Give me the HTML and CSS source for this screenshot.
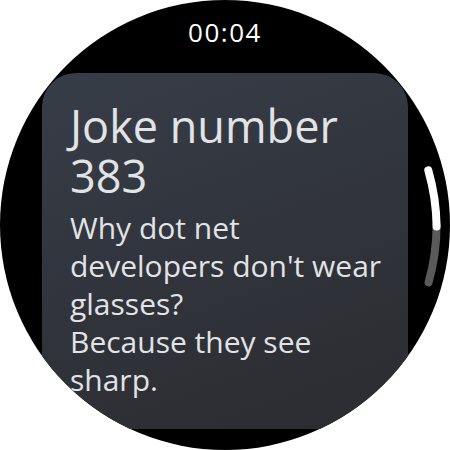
FILE: index.html
```html
<!DOCTYPE html>
<html lang="en">
<head>
    <meta charset="utf-8"/>
    <meta name="viewport" content="width=device-width, initial-scale=1.0">
    <title>Joke</title>
    <link rel="stylesheet" href="styles.css">
</head>
<body>
    <div class="watch">
        <div class="time">00:04</div>
        <div class="card">
            <h1>Joke number 383</h1>
            <p>Why dot net developers don't wear glasses?</p>
            <p>Because they see sharp.</p>
        </div>
        <!-- scroll indicator follows the bezel -->
        <svg class="scroll" viewBox="0 0 450 450">
            <path class="track" d="M 436.6 225.0 A 211.5 211.5 0 0 1 428.6 282.4"/>
            <path class="thumb" d="M 428.3 170.3 A 211.5 211.5 0 0 1 436.6 226.5"/>
        </svg>
    </div>
</body>
</html>
```

FILE: styles.css
```css
body {
    margin: 0;
    padding: 0;
    background-color: #fff;
    font-family: "Open Sans", Roboto, sans-serif;
}
.watch {
    position: relative;
    width: 450px;
    height: 450px;
    border-radius: 50%;
    overflow: hidden;
    background-color: #000;
    display: flex;
    flex-direction: column;
    align-items: center;
}
.time {
    margin-top: 17px;
    height: 31px;
    line-height: 31px;
    font-size: 26px;
    letter-spacing: 1.5px;
    color: #fff;
}
.card {
    box-sizing: border-box;
    width: 366px;
    height: 356px;
    margin-top: 25px;
    padding: 28px 12px 0 28px;
    border-radius: 34px;
    background: linear-gradient(160deg, #373d48 0%, #30333a 55%, #2b2c30 100%);
    color: #e1e3e6;
}
.card h1 {
    margin: 0 0 8px;
    font-size: 45px;
    line-height: 50px;
    font-weight: 400;
}
.card p {
    margin: 0;
    font-size: 30px;
    line-height: 38px;
}
.scroll {
    position: absolute;
    left: 0;
    top: 0;
    width: 450px;
    height: 450px;
    fill: none;
    stroke-width: 8;
    stroke-linecap: round;
}
.scroll .track {
    stroke: #5a5a5a;
}
.scroll .thumb {
    stroke: #fff;
}
```
